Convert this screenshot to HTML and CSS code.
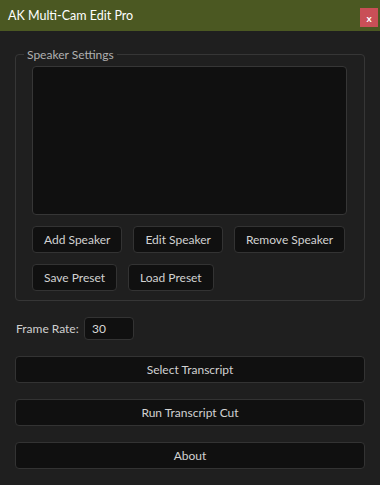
FILE: index.html
```html
<!DOCTYPE html>
<html lang="en">
<head>
    <meta charset="UTF-8">
    <title>AK Multi-Cam Edit Pro</title>
    <link rel="stylesheet" href="styles.css">
</head>
<body>
    <div class="titleBar">
        <span class="titleText">AK Multi-Cam Edit Pro</span>
        <button class="closeBtn">x</button>
    </div>

    <div class="panel">
        <fieldset class="speakerBox">
            <legend>Speaker Settings</legend>
            <div class="speakerList"></div>
            <div class="btnRow">
                <button class="btn">Add Speaker</button>
                <button class="btn">Edit Speaker</button>
                <button class="btn">Remove Speaker</button>
            </div>
            <div class="btnRow">
                <button class="btn">Save Preset</button>
                <button class="btn">Load Preset</button>
            </div>
        </fieldset>

        <div class="rateRow">
            <label for="frameRate">Frame Rate:</label>
            <input type="text" id="frameRate" value="30">
        </div>

        <button class="btn wideBtn">Select Transcript</button>
        <button class="btn wideBtn">Run Transcript Cut</button>
        <button class="btn wideBtn">About</button>
    </div>
</body>
</html>
```

FILE: styles.css
```css
body{
    margin: 0;
    background: #1f1f1f;
    font-family: Lato, "Open Sans", sans-serif;
    font-size: 12px;
    color: #cfcfcf;
}

.titleBar{
    height: 31px;
    background: #4b5822;
    display: flex;
    align-items: center;
    justify-content: space-between;
    padding: 0 2px 0 8px;
}
.titleText{
    color: #fff;
    font-size: 12.5px;
}
.closeBtn{
    width: 18px;
    height: 19px;
    margin-top: 4px;
    border: none;
    padding: 0;
    background: #c94f57;
    color: #fff;
    font-family: inherit;
    font-size: 10px;
    font-weight: bold;
}

.panel{
    padding: 16px 15px 0;
    display: flex;
    flex-direction: column;
}

.speakerBox{
    margin: 0;
    min-width: 0;
    padding: 4px 17px 9px 16px;
    border: 1px solid #363636;
    border-radius: 4px;
}
.speakerBox legend{
    color: #b0b0b0;
    padding: 0 3px;
    margin-left: -8px;
}
.speakerList{
    height: 147px;
    background: #101010;
    border: 1px solid #363636;
    border-radius: 4px;
}

.btnRow{
    display: flex;
    gap: 11px;
    margin-top: 11px;
}

.btn{
    height: 27px;
    padding: 0 11px;
    background: #101010;
    border: 1px solid #333;
    border-radius: 4px;
    color: #d2d2d2;
    font-family: inherit;
    font-size: 12px;
    white-space: nowrap;
}
.btnRow .btn{
    flex: none;
}

.rateRow{
    display: flex;
    align-items: center;
    margin-top: 16px;
}
.rateRow label{
    width: 68px;
    padding-left: 1px;
}
.rateRow input{
    width: 50px;
    height: 23px;
    box-sizing: border-box;
    padding: 0 7px;
    background: #101010;
    border: 1px solid #333;
    border-radius: 4px;
    color: #d8d8d8;
    font-family: inherit;
    font-size: 12px;
}

.wideBtn{
    margin-top: 16px;
}
```
